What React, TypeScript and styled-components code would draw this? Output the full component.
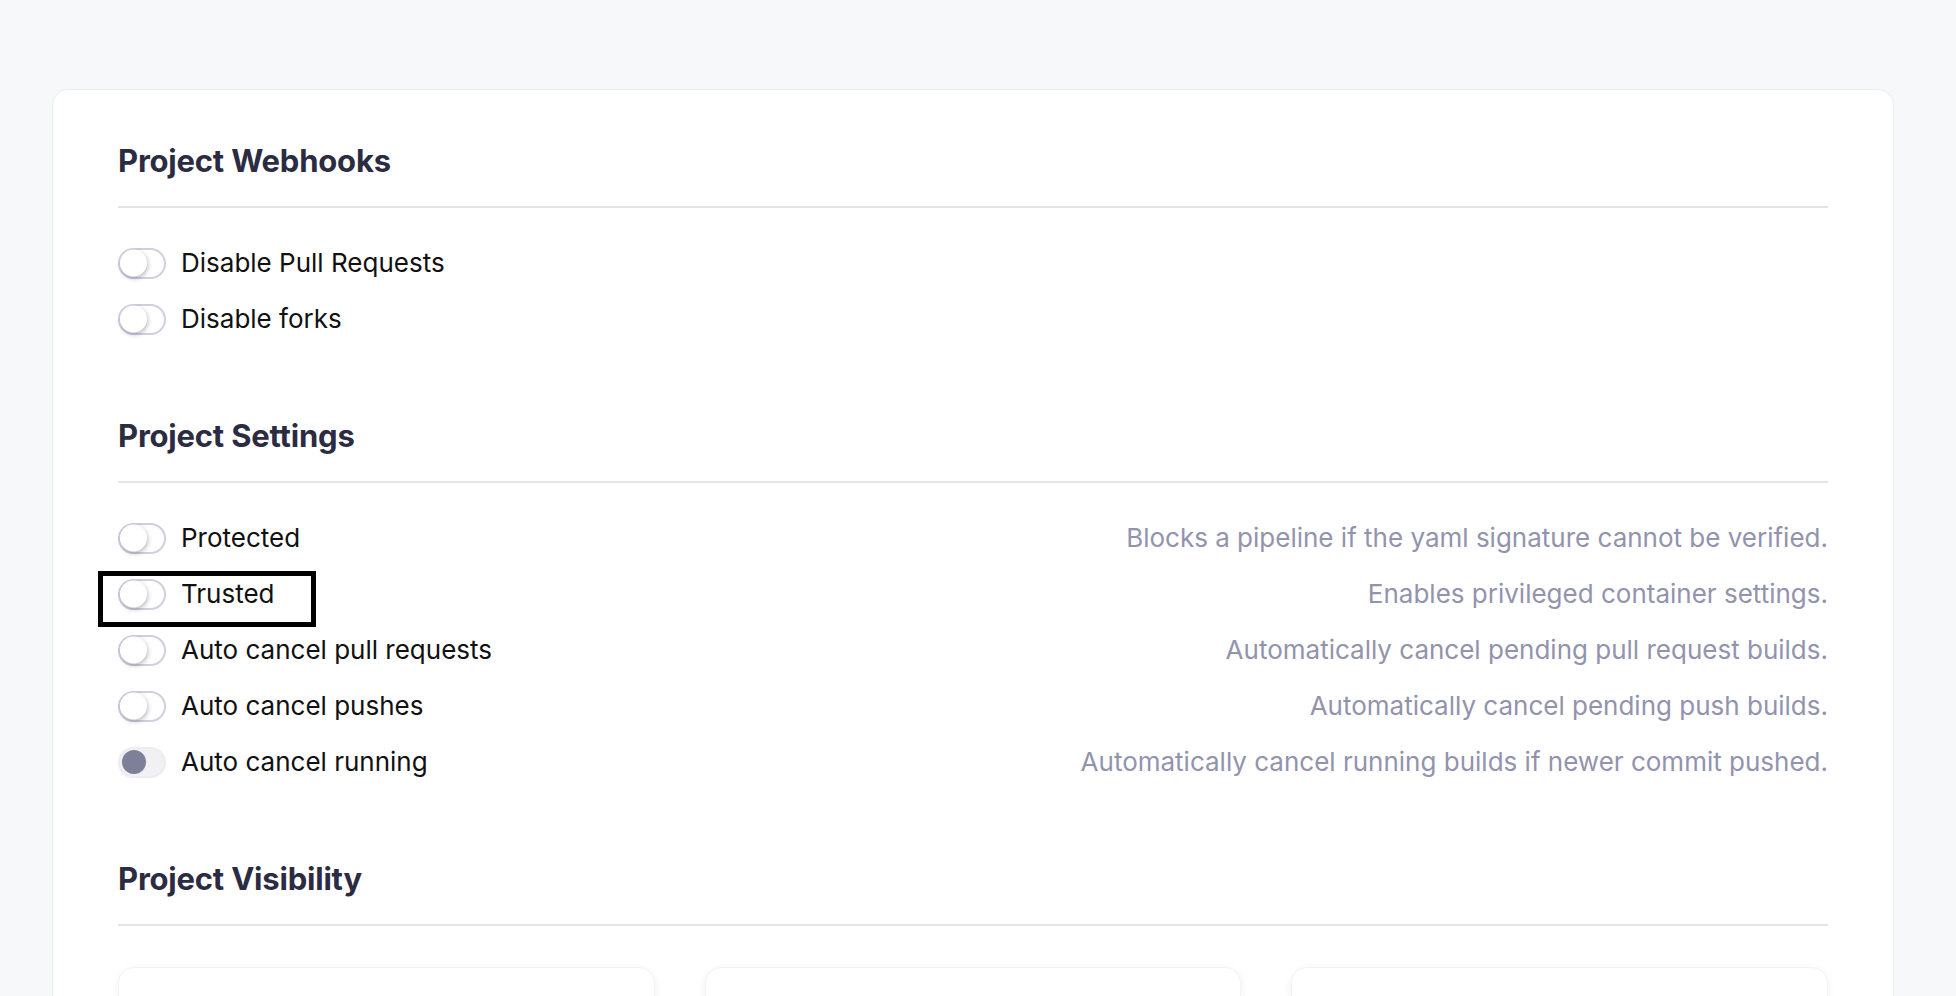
import styled, { createGlobalStyle, css } from 'styled-components'

const GlobalStyle = createGlobalStyle`
  html, body {
    margin: 0;
    padding: 0;
    background: #f7f8fa;
    font-family: Inter, "Noto Sans", "Liberation Sans", sans-serif;
  }
  *, *::before, *::after {
    box-sizing: border-box;
  }
`

const Page = styled.div`
  padding: 89px 62px 0 52px;
  height: 996px;
  overflow: hidden;
`

const Panel = styled.div`
  background: #ffffff;
  border: 1px solid #ececf0;
  border-radius: 16px;
  padding: 53px 65px 60px;
  min-height: 1000px;
`

const Section = styled.section`
  & + & {
    margin-top: 71px;
  }
`

const Heading = styled.h2`
  margin: 0;
  font-size: 31px;
  line-height: 36px;
  font-weight: 700;
  color: #2b2c42;
  letter-spacing: -0.2px;
`

const Divider = styled.hr`
  margin: 27px 0 27px;
  border: none;
  height: 2px;
  background: #e3e3e9;
`

const List = styled.div`
  display: flex;
  flex-direction: column;
`

const Row = styled.div`
  display: flex;
  align-items: center;
  justify-content: space-between;
  height: 56px;
`

const Option = styled.label<{ $highlighted?: boolean }>`
  position: relative;
  display: flex;
  align-items: center;
  gap: 15px;
  cursor: pointer;

  ${({ $highlighted }) =>
    $highlighted &&
    css`
      &::after {
        content: '';
        position: absolute;
        left: -20px;
        top: -8px;
        width: 218px;
        height: 56px;
        border: 5px solid #000;
        pointer-events: none;
      }
    `}
`

const Track = styled.span<{ $on?: boolean }>`
  position: relative;
  display: inline-block;
  width: 48px;
  height: 31px;
  border-radius: 16px;
  flex-shrink: 0;
  background: ${({ $on }) => ($on ? '#f1f1f4' : '#ffffff')};
  border: 2px solid ${({ $on }) => ($on ? '#ededf1' : '#cfcfe0')};
`

const Knob = styled.span<{ $on?: boolean }>`
  position: absolute;
  top: 50%;
  transform: translateY(-50%);
  border-radius: 50%;
  ${({ $on }) =>
    $on
      ? css`
          left: 2px;
          width: 24px;
          height: 24px;
          background: #7e7f99;
        `
      : css`
          left: 0px;
          width: 27px;
          height: 27px;
          background: #ffffff;
          box-shadow: 1px 2px 4px rgba(60, 60, 90, 0.35);
        `}
`

const Label = styled.span`
  font-size: 26px;
  line-height: 30px;
  color: #111111;
`

const Description = styled.span`
  font-size: 26px;
  line-height: 30px;
  color: #9293ad;
`

const CardGrid = styled.div`
  display: grid;
  grid-template-columns: repeat(3, 1fr);
  gap: 50px;
  margin-top: 41px;
`

const VisibilityCard = styled.div`
  height: 220px;
  background: #ffffff;
  border-radius: 16px;
  border: 1px solid #f4f4f6;
  box-shadow: 0 2px 8px rgba(30, 30, 60, 0.06);
`

interface SettingItem {
  label: string
  description?: string
  on?: boolean
  highlighted?: boolean
}

const webhooks: SettingItem[] = [{ label: 'Disable Pull Requests' }, { label: 'Disable forks' }]

const settings: SettingItem[] = [
  { label: 'Protected', description: 'Blocks a pipeline if the yaml signature cannot be verified.' },
  { label: 'Trusted', description: 'Enables privileged container settings.', highlighted: true },
  { label: 'Auto cancel pull requests', description: 'Automatically cancel pending pull request builds.' },
  { label: 'Auto cancel pushes', description: 'Automatically cancel pending push builds.' },
  { label: 'Auto cancel running', description: 'Automatically cancel running builds if newer commit pushed.', on: true },
]

const SettingRow = ({ label, description, on, highlighted }: SettingItem) => {
  return (
    <Row>
      <Option $highlighted={highlighted}>
        <Track $on={on}>
          <Knob $on={on} />
        </Track>
        <Label>{label}</Label>
      </Option>
      {description && <Description>{description}</Description>}
    </Row>
  )
}

const App = () => {
  return (
    <>
      <GlobalStyle />
      <Page>
        <Panel>
          <Section>
            <Heading>Project Webhooks</Heading>
            <Divider />
            <List>
              {webhooks.map((item) => (
                <SettingRow key={item.label} {...item} />
              ))}
            </List>
          </Section>
          <Section>
            <Heading>Project Settings</Heading>
            <Divider />
            <List>
              {settings.map((item) => (
                <SettingRow key={item.label} {...item} />
              ))}
            </List>
          </Section>
          <Section>
            <Heading>Project Visibility</Heading>
            <Divider />
            <CardGrid>
              <VisibilityCard />
              <VisibilityCard />
              <VisibilityCard />
            </CardGrid>
          </Section>
        </Panel>
      </Page>
    </>
  )
}

export default App
